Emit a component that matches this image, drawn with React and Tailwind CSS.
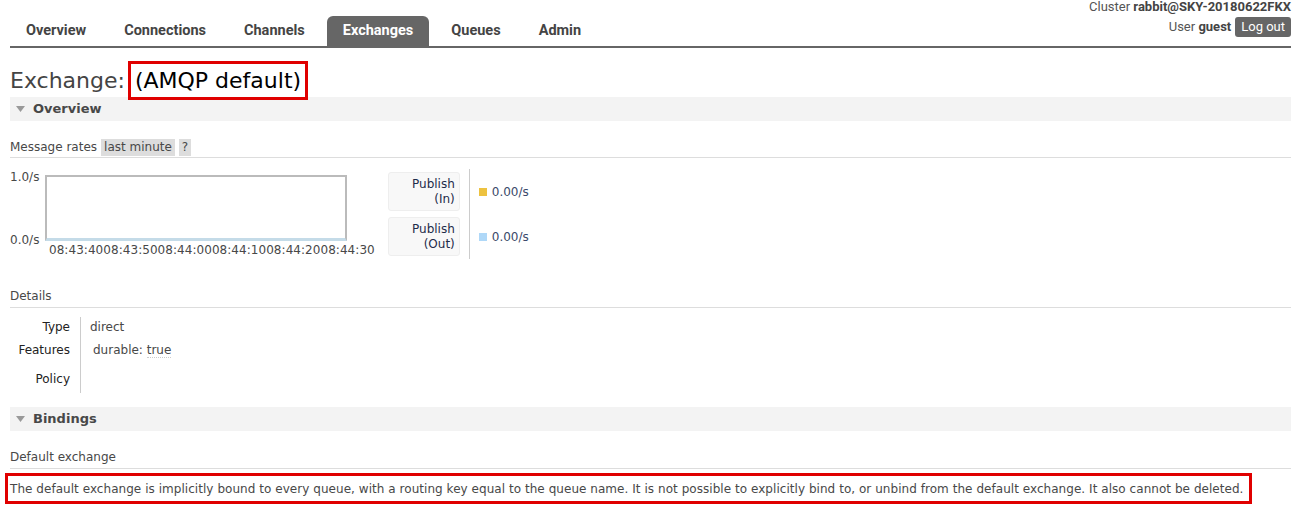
import React from 'react'

const tabs = ['Overview', 'Connections', 'Channels', 'Exchanges', 'Queues', 'Admin']

function Triangle() {
  return (
    <svg width="9" height="6" viewBox="0 0 9 6" className="mr-[8px]">
      <path d="M0 0 L9 0 L4.5 6 Z" fill="#999" />
    </svg>
  )
}

function SectionHeader({ title }) {
  return (
    <div className="flex items-center h-[24px] bg-[#f3f3f3] pl-[6px]">
      <Triangle />
      <span className="font-bold text-[13px] text-[#484848]">{title}</span>
    </div>
  )
}

function App() {
  return (
    <div className="w-[1305px] h-[521px] bg-white text-[#484848] text-[12px] overflow-hidden" style={{ fontFamily: '"DejaVu Sans", Verdana, sans-serif' }}>
      <div className="relative ml-[10px] mr-[14px] h-[48px] border-b-2 border-[#666]">
        <div className="absolute left-0 bottom-0 flex gap-[6px]" style={{ fontFamily: 'Roboto, "Liberation Sans", sans-serif' }}>
          {tabs.map((t) => (
            <div
              key={t}
              className={
                t === 'Exchanges'
                  ? 'h-[30px] px-[16px] flex items-center rounded-t-[6px] bg-[#666] text-white font-bold text-[14.5px]'
                  : 'h-[30px] px-[16px] flex items-center text-[#444] font-bold text-[14.5px]'
              }
            >
              {t}
            </div>
          ))}
        </div>
        <div className="absolute right-0 top-0 flex flex-col items-end text-[13px] text-[#555]" style={{ fontFamily: 'Roboto, "Liberation Sans", sans-serif' }}>
          <div className="leading-[14px]">
            Cluster <b className="text-[#444]">rabbit@SKY-20180622FKX</b>
          </div>
          <div className="flex items-center mt-[3px]">
            <span>User <b className="text-[#444]">guest</b></span>
            <span className="ml-[4px] bg-[#666] text-white rounded-[3px] px-[6px] h-[20px] flex items-center">Log out</span>
          </div>
        </div>
      </div>

      <div className="pl-[10px] pr-[14px]">
        <div className="flex items-center h-[53px] text-[22px] text-[#444] pt-[12px]">
          <span>Exchange:</span>
          <span className="ml-[3px] border-[3px] border-[#e00000] px-[4px] h-[39px] flex items-center text-black">(AMQP default)</span>
        </div>
        <div className="mt-[-4px]">
          <SectionHeader title="Overview" />
        </div>

        <div className="mt-[17px] flex items-center border-b border-[#ddd] pb-[1px]">
          <span>Message rates</span>
          <span className="ml-[4px] bg-[#ddd] px-[3px] h-[17px] flex items-center">last minute</span>
          <span className="ml-[4px] bg-[#ddd] px-[3px] h-[17px] flex items-center">?</span>
        </div>

        <div className="flex mt-[14px]">
          <div className="flex flex-col">
            <div className="flex">
              <div className="w-[35px] flex flex-col justify-between h-[74px]">
                <span className="leading-[12px] -mt-[1px]">1.0/s</span>
                <span className="leading-[12px]">0.0/s</span>
              </div>
              <div className="mt-[3px] w-[302px] h-[66px] border-2 border-[#bbb] border-b-[3px] border-b-[#c4dbe8] bg-white"></div>
            </div>
            <div className="ml-[39px] -mt-[5px] tracking-[0.05px]">08:43:4008:43:5008:44:0008:44:1008:44:2008:44:30</div>
          </div>

          <div className="ml-[13px] flex flex-col gap-[6px] text-[#1e2c4a]">
            <div className="w-[72px] h-[39px] bg-[#f8f8f8] border border-[#eee] rounded-[3px] flex flex-col items-end justify-center pr-[4px] leading-[15px]">
              <span>Publish</span>
              <span>(In)</span>
            </div>
            <div className="w-[72px] h-[39px] bg-[#f8f8f8] border border-[#eee] rounded-[3px] flex flex-col items-end justify-center pr-[4px] leading-[15px]">
              <span>Publish</span>
              <span>(Out)</span>
            </div>
          </div>
          <div className="ml-[9px] -mt-[3px] w-px h-[90px] bg-[#ccc]"></div>
          <div className="ml-[9px] -mt-[3px] flex flex-col text-[#3a4a6a]">
            <div className="h-[45px] flex items-center">
              <span className="w-[8px] h-[8px] bg-[#edc240] mr-[5px]"></span>
              <span>0.00/s</span>
            </div>
            <div className="h-[45px] flex items-center">
              <span className="w-[8px] h-[8px] bg-[#afd8f8] mr-[5px]"></span>
              <span>0.00/s</span>
            </div>
          </div>
        </div>

        <div className="mt-[28px] border-b border-[#ddd] pb-[2px]">Details</div>
        <div className="flex mt-[9px]">
          <div className="w-[60px] flex flex-col items-end text-[#222]">
            <span className="h-[24px] pt-[1px]">Type</span>
            <span className="h-[29px]">Features</span>
            <span className="h-[24px]">Policy</span>
          </div>
          <div className="ml-[10px] w-px h-[76px] bg-[#ccc]"></div>
          <div className="ml-[9px] flex flex-col">
            <span className="h-[24px] pt-[1px]">direct</span>
            <span className="h-[29px] ml-[3px]">durable: <span className="border-b border-dotted border-[#ccc]">true</span></span>
          </div>
        </div>

        <div className="mt-[13px]">
          <SectionHeader title="Bindings" />
        </div>
        <div className="mt-[17px] border-b border-[#ddd] pb-[2px]">Default exchange</div>
      </div>
      <div className="mt-[4px] ml-[5px] w-[1247px] h-[31px] border-[3px] border-[#e00000] flex items-center pl-[2px] tracking-[0.045px]">
        The default exchange is implicitly bound to every queue, with a routing key equal to the queue name. It is not possible to explicitly bind to, or unbind from the default exchange. It also cannot be deleted.
      </div>
    </div>
  )
}

export default App
